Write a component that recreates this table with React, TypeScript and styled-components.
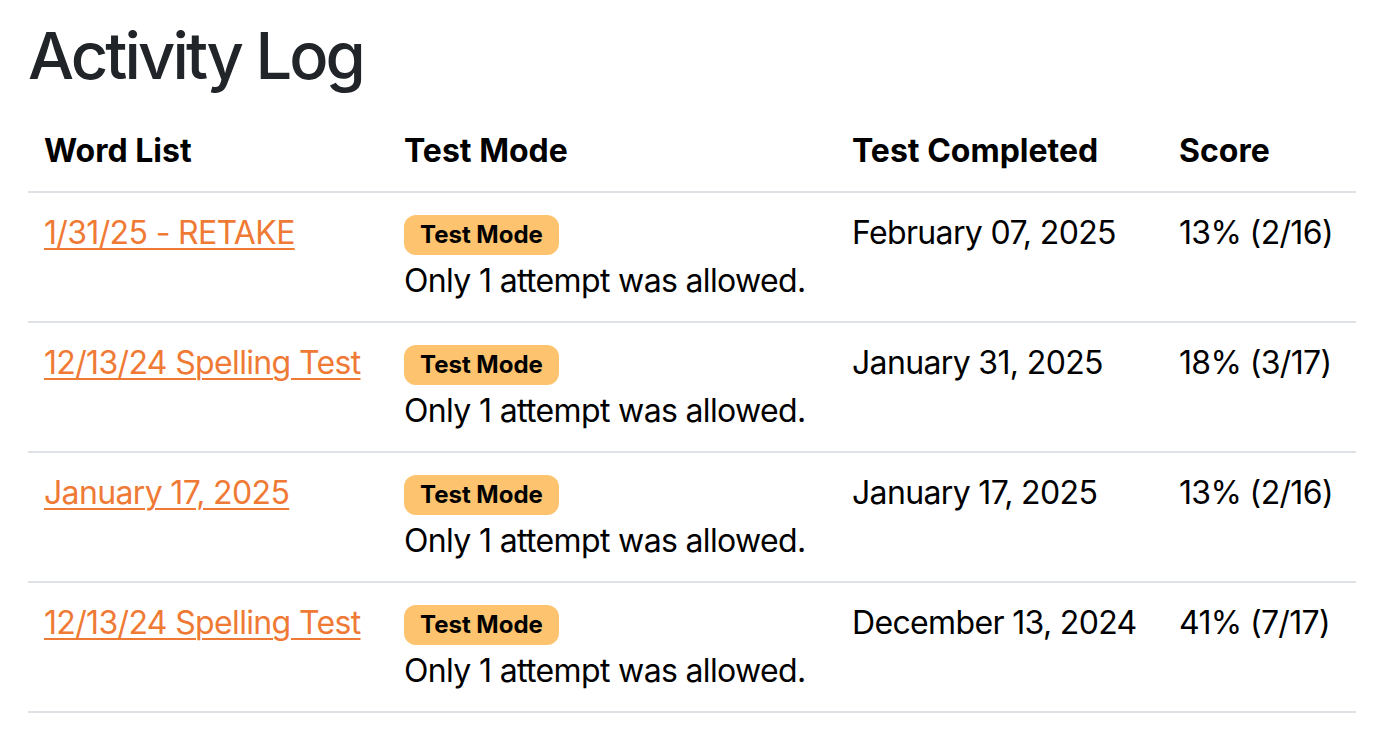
import React from "react";
import styled, { createGlobalStyle } from "styled-components";

const GlobalStyle = createGlobalStyle`
  html, body {
    margin: 0;
    padding: 0;
    background: #ffffff;
  }
  body {
    font-family: Inter, "Noto Sans", "Liberation Sans", sans-serif;
    font-size: 32px;
    line-height: 1.5;
    color: #000000;
  }
`;

const Page = styled.main`
  padding: 17px 38px 0 28px;
`;

const Title = styled.h1`
  margin: 0 0 16px 0;
  font-size: 65px;
  font-weight: 500;
  line-height: 1.2;
  color: #212529;
  letter-spacing: -2.9px;
`;

const Table = styled.table`
  width: 100%;
  border-collapse: collapse;
  table-layout: fixed;
`;

const Col = styled.col<{ $w: number }>`
  width: ${(p) => p.$w}px;
`;

const HeadCell = styled.th`
  text-align: left;
  vertical-align: bottom;
  font-weight: 700;
  padding: 16px;
  border-bottom: 2px solid #dee2e6;
  color: #000;
  white-space: nowrap;
`;

const Row = styled.tr`
  border-bottom: 2px solid #dee2e6;
`;

const Cell = styled.td`
  vertical-align: top;
  padding: 16px;
  white-space: nowrap;
  letter-spacing: -0.65px;
`;

const ListLink = styled.a`
  color: #ef7a35;
  text-decoration: underline;
  text-underline-offset: 4px;
  text-decoration-thickness: 2px;
`;

const Badge = styled.span`
  display: inline-block;
  background: #fdc36e;
  color: #000;
  font-size: 24px;
  font-weight: 700;
  line-height: 1;
  letter-spacing: 0;
  padding: 8px 16px;
  border-radius: 12px;
  vertical-align: middle;
`;

const Note = styled.div``;

type Entry = { list: string; completed: string; score: string };

const entries: Entry[] = [
  { list: "1/31/25 - RETAKE", completed: "February 07, 2025", score: "13% (2/16)" },
  { list: "12/13/24 Spelling Test", completed: "January 31, 2025", score: "18% (3/17)" },
  { list: "January 17, 2025", completed: "January 17, 2025", score: "13% (2/16)" },
  { list: "12/13/24 Spelling Test", completed: "December 13, 2024", score: "41% (7/17)" },
];

export default function App() {
  return (
    <>
      <GlobalStyle />
      <Page>
        <Title>Activity Log</Title>
        <Table>
          <colgroup>
            <Col $w={360} />
            <Col $w={448} />
            <Col $w={327} />
            <Col $w={193} />
          </colgroup>
          <thead>
            <tr>
              <HeadCell>Word List</HeadCell>
              <HeadCell>Test Mode</HeadCell>
              <HeadCell>Test Completed</HeadCell>
              <HeadCell>Score</HeadCell>
            </tr>
          </thead>
          <tbody>
            {entries.map((e, i) => (
              <Row key={i}>
                <Cell>
                  <ListLink href="#">{e.list}</ListLink>
                </Cell>
                <Cell>
                  <Badge>Test Mode</Badge>
                  <Note>Only 1 attempt was allowed.</Note>
                </Cell>
                <Cell>{e.completed}</Cell>
                <Cell>{e.score}</Cell>
              </Row>
            ))}
          </tbody>
        </Table>
      </Page>
    </>
  );
}
